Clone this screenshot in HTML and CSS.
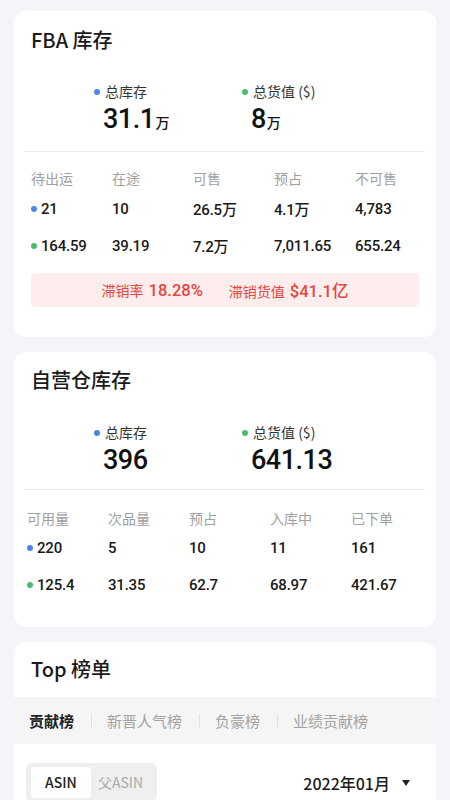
FILE: index.html
```html
<!DOCTYPE html>
<html lang="zh-CN">
<head>
<meta charset="utf-8">
<title>库存</title>
<link rel="stylesheet" href="styles.css">
</head>
<body>
<div class="page">
  <section class="card card-fba">
    <h2 class="card-title">FBA 库存</h2>
    <div class="summary">
      <div class="sum-item">
        <div class="sum-label"><span class="dot dot-blue"></span>总库存</div>
        <div class="sum-value">31.1<span class="unit">万</span></div>
      </div>
      <div class="sum-item">
        <div class="sum-label"><span class="dot dot-green"></span>总货值 ($)</div>
        <div class="sum-value">8<span class="unit">万</span></div>
      </div>
    </div>
    <div class="divider"></div>
    <div class="table table-fba">
      <div class="row head">
        <span>待出运</span><span>在途</span><span>可售</span><span>预占</span><span>不可售</span>
      </div>
      <div class="row">
        <span><i class="dot dot-blue"></i>21</span><span>10</span><span>26.5万</span><span>4.1万</span><span>4,783</span>
      </div>
      <div class="row">
        <span><i class="dot dot-green"></i>164.59</span><span>39.19</span><span>7.2万</span><span>7,011.65</span><span>655.24</span>
      </div>
    </div>
    <div class="alert">
      <span class="alert-item">滞销率<b>18.28%</b></span>
      <span class="alert-item">滞销货值<b>$41.1亿</b></span>
    </div>
  </section>

  <section class="card card-self">
    <h2 class="card-title">自营仓库存</h2>
    <div class="summary">
      <div class="sum-item">
        <div class="sum-label"><span class="dot dot-blue"></span>总库存</div>
        <div class="sum-value">396</div>
      </div>
      <div class="sum-item">
        <div class="sum-label"><span class="dot dot-green"></span>总货值 ($)</div>
        <div class="sum-value">641.13</div>
      </div>
    </div>
    <div class="divider"></div>
    <div class="table table-self">
      <div class="row head">
        <span>可用量</span><span>次品量</span><span>预占</span><span>入库中</span><span>已下单</span>
      </div>
      <div class="row">
        <span><i class="dot dot-blue"></i>220</span><span>5</span><span>10</span><span>11</span><span>161</span>
      </div>
      <div class="row">
        <span><i class="dot dot-green"></i>125.4</span><span>31.35</span><span>62.7</span><span>68.97</span><span>421.67</span>
      </div>
    </div>
  </section>

  <section class="card card-top">
    <h2 class="card-title">Top 榜单</h2>
    <div class="tabs">
      <span class="tab active">贡献榜</span>
      <span class="sep"></span>
      <span class="tab">新晋人气榜</span>
      <span class="sep"></span>
      <span class="tab">负豪榜</span>
      <span class="sep"></span>
      <span class="tab">业绩贡献榜</span>
    </div>
    <div class="toolbar">
      <div class="segment">
        <span class="seg seg-on">ASIN</span>
        <span class="seg">父ASIN</span>
      </div>
      <div class="date">2022年01月<span class="caret"></span></div>
    </div>
  </section>
</div>
</body>
</html>
```

FILE: styles.css
```css
* { box-sizing: border-box; }
html, body { margin: 0; padding: 0; }
body {
  background: #f3f5f8;
  font-family: "Noto Sans CJK SC", "Noto Sans", sans-serif;
  color: #1d1d1f;
  width: 450px;
  height: 800px;
  overflow: hidden;
}
.page {
  padding: 11px 14px 0;
  display: flex;
  flex-direction: column;
  gap: 15px;
}
.card {
  background: #fff;
  border-radius: 12px;
  overflow: hidden;
}
.card-title {
  margin: 0;
  font-size: 20px;
  font-weight: 500;
  line-height: 28px;
  padding: 15px 17px 0;
  color: #1a1a1a;
}
.card-self .card-title { padding-top: 14px; }
.card-self .summary { margin-top: 28px; }
.card-top .card-title { padding-top: 13px; }
.summary {
  display: grid;
  grid-template-columns: 148px 1fr;
  padding: 0 0 0 80px;
  margin-top: 27px;
}
.sum-label {
  display: flex;
  align-items: center;
  font-size: 14px;
  line-height: 20px;
  color: #333;
}
.dot {
  display: inline-block;
  width: 6px;
  height: 6px;
  border-radius: 50%;
  margin-right: 5px;
  margin-top: 2px;
}
.dot-blue { background: #4d86e8; }
.dot-green { background: #4dbb6e; }
.sum-value {
  font-family: "Roboto", "Noto Sans CJK SC", sans-serif;
  font-size: 27px;
  font-weight: 500;
  line-height: 30px;
  margin-top: 3px;
  color: #111;
  padding-left: 9px;
  letter-spacing: -0.5px;
}
.unit {
  font-family: "Noto Sans CJK SC", sans-serif;
  font-size: 14px;
  margin-left: 1px;
  letter-spacing: 0;
}
.divider {
  height: 1px;
  background: #eeeeee;
  margin: 14px 11px 0 10px;
}
.table { margin-top: 16px; }
.table-fba { padding-left: 17px; }
.table-self { padding-left: 13px; margin-top: 18px; }
.row {
  display: grid;
  grid-template-columns: repeat(5, 81px);
  height: 37px;
  align-items: center;
  font-family: "Roboto", "Noto Sans CJK SC", sans-serif;
  font-size: 15px;
  font-weight: 500;
  color: #1a1a1a;
  letter-spacing: -0.2px;
}
.row.head {
  height: 20px;
  margin-bottom: 2px;
  font-family: "Noto Sans CJK SC", sans-serif;
  font-size: 14px;
  font-weight: 400;
  color: #a0a0a0;
  letter-spacing: 0;
}
.table-self .row.head { margin-bottom: 1px; }
.row span {
  display: flex;
  align-items: center;
  white-space: nowrap;
}
.row .dot { margin-right: 4px; margin-top: 0; }
.alert {
  margin: 9px 17px 30px;
  height: 34px;
  border-radius: 4px;
  background: #fdeded;
  display: flex;
  justify-content: center;
  align-items: center;
  gap: 26px;
  color: #e5463c;
  font-size: 14px;
}
.alert b {
  font-family: "Roboto", "Noto Sans CJK SC", sans-serif;
  font-size: 16.5px;
  font-weight: 500;
  margin-left: 5px;
}
.card-self .table { padding-bottom: 24px; }
.tabs {
  margin-top: 14px;
  background: #f5f5f5;
  height: 47px;
  display: flex;
  align-items: center;
  padding-left: 15px;
  font-size: 15px;
  color: #a3a3a3;
}
.tab.active {
  color: #222;
  font-weight: 700;
}
.sep {
  width: 1px;
  height: 14px;
  background: #e2e2e2;
  margin: 0 15px 0 17px;
}
.toolbar {
  display: flex;
  align-items: center;
  justify-content: space-between;
  padding: 19px 26px 20px 12px;
}
.segment {
  display: flex;
  align-items: center;
  background: #efefef;
  border-radius: 6px;
  padding: 4px 5px;
  width: 131px;
}
.seg {
  height: 31px;
  line-height: 31px;
  width: 60px;
  text-align: center;
  font-size: 14px;
  color: #aaa;
}
.seg-on {
  background: #fff;
  border-radius: 4px;
  color: #222;
  font-weight: 500;
}
.seg + .seg { text-align: left; padding-left: 7px; width: auto; }
.date {
  display: flex;
  align-items: center;
  font-size: 16px;
  font-weight: 500;
  color: #1a1a1a;
}
.caret {
  width: 0;
  height: 0;
  border-left: 4px solid transparent;
  border-right: 4px solid transparent;
  border-top: 6px solid #222;
  margin-left: 12px;
}
```
